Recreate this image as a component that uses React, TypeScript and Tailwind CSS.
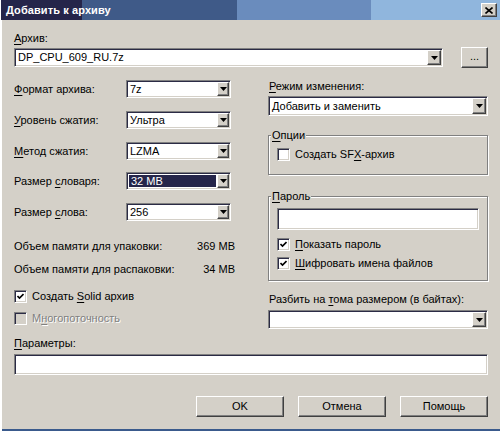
import React from 'react';

const sunken =
  'border border-t-[#808080] border-l-[#808080] border-b-white border-r-white shadow-[inset_1px_1px_0_#2b2b45,inset_-1px_-1px_0_#d4d0c8] p-px bg-white';
const raised =
  'border border-t-white border-l-white border-b-[#404040] border-r-[#404040] shadow-[inset_-1px_-1px_0_#808080] bg-[#d4d0c8]';

function U({ children }: { children: React.ReactNode }) {
  return <span className="underline underline-offset-[2px] decoration-1">{children}</span>;
}

function Arrow() {
  return (
    <svg width="7" height="4" viewBox="0 0 7 4">
      <polygon points="0,0 7,0 3.5,4" fill="#000" />
    </svg>
  );
}

function Combo({
  value = '',
  className = '',
  btn = 'w-[14px]',
  selected = false,
}: {
  value?: string;
  className?: string;
  btn?: string;
  selected?: boolean;
}) {
  return (
    <div className={`flex ${sunken} ${className}`}>
      <div
        className={`flex-1 min-w-0 flex items-center pl-[2px] ${selected ? 'bg-[#25254a] text-white m-px' : ''}`}
      >
        {value}
      </div>
      <div className={`${raised} ${btn} flex items-center justify-center`}>
        <Arrow />
      </div>
    </div>
  );
}

function Check({
  checked = false,
  disabled = false,
  children,
}: {
  checked?: boolean;
  disabled?: boolean;
  children: React.ReactNode;
}) {
  return (
    <div className="flex items-center h-[13px]">
      <div
        className={`w-[13px] h-[13px] shrink-0 border border-t-[#808080] border-l-[#808080] border-b-white border-r-white shadow-[inset_1px_1px_0_#2b2b45,inset_-1px_-1px_0_#d4d0c8] flex items-center justify-center ${
          disabled ? 'bg-[#d4d0c8]' : 'bg-white'
        }`}
      >
        {checked && (
          <svg width="7" height="7" viewBox="0 0 7 7">
            <polyline points="0.5,3 2.5,5 6.5,1" fill="none" stroke="#000" strokeWidth="1.6" />
          </svg>
        )}
      </div>
      <span
        className={`ml-[5px] whitespace-nowrap ${disabled ? 'text-[#808080] [text-shadow:1px_1px_0_#fff]' : ''}`}
      >
        {children}
      </span>
    </div>
  );
}

function Group({
  title,
  className = '',
  children,
}: {
  title: React.ReactNode;
  className?: string;
  children: React.ReactNode;
}) {
  return (
    <div
      className={`relative border border-[#808080] shadow-[1px_1px_0_#fff,inset_1px_1px_0_#fff] ${className}`}
    >
      <span className="absolute -top-[7px] left-[2px] px-px bg-[#d4d0c8] leading-[13px]">{title}</span>
      {children}
    </div>
  );
}

function Button({ children, className = '' }: { children: React.ReactNode; className?: string }) {
  return (
    <div className={`${raised} flex items-center justify-center ${className}`}>{children}</div>
  );
}

function Row({ label, children, className = '' }: { label: React.ReactNode; children: React.ReactNode; className?: string }) {
  return (
    <div className={`flex items-center ${className}`}>
      <span className="flex-1 whitespace-nowrap">{label}</span>
      {children}
    </div>
  );
}

export default function App() {
  return (
    <div className="w-[500px] h-[431px] overflow-hidden bg-[#d4d0c8] text-black text-[11px] leading-[13px] font-['Liberation_Sans',Arial,sans-serif] shadow-[inset_2px_0_0_#fff,inset_0_-2px_0_#3a5a8c]">
      {/* title bar */}
      <div className="h-[20px] ml-px flex items-center justify-between pl-[5px] pr-[3px] bg-[linear-gradient(to_right,#25254a_0_81px,#3f5a88_81px_236px,#6a8cbd_236px_370px,#90b6dd_370px)]">
        <span className="text-white font-bold text-[11px] tracking-[0.1px]">Добавить к архиву</span>
        <div className={`${raised} w-[16px] h-[14px] flex items-center justify-center`}>
          <svg width="8" height="7" viewBox="0 0 8 7">
            <path d="M0.5 0.5 L7.5 6.5 M7.5 0.5 L0.5 6.5" stroke="#000" strokeWidth="1.6" />
          </svg>
        </div>
      </div>

      <div className="pl-[14px] pr-[12px] pt-[12px]">
        <div>
          <U>А</U>рхив:
        </div>
        <div className="mt-[2px] flex items-center">
          <Combo value="DP_CPU_609_RU.7z" className="w-[429px] h-[19px]" />
          <Button className="ml-auto w-[27px] h-[21px] pb-[3px]">...</Button>
        </div>

        <div className="grid grid-cols-[221px_220px] gap-x-[33px]">
          {/* left column */}
          <div className="flex flex-col">
            <Row label={<><U>Ф</U>ормат архива:</>} className="mt-[12px]">
              <Combo value="7z" className="w-[105px] h-[18px] mr-[4px]" btn="w-[12px]" />
            </Row>
            <Row label={<><U>У</U>ровень сжатия:</>} className="mt-[13px]">
              <Combo value="Ультра" className="w-[105px] h-[18px] mr-[4px]" btn="w-[12px]" />
            </Row>
            <Row label={<><U>М</U>етод сжатия:</>} className="mt-[13px]">
              <Combo value="LZMA" className="w-[105px] h-[18px] mr-[4px]" btn="w-[12px]" />
            </Row>
            <Row label={<>Размер <U>с</U>ловаря:</>} className="mt-[12px]">
              <Combo value="32 MB" selected className="w-[105px] h-[18px] mr-[4px]" btn="w-[12px]" />
            </Row>
            <Row label={<>Размер <U>с</U>лова:</>} className="mt-[13px]">
              <Combo value="256" className="w-[105px] h-[18px] mr-[4px]" btn="w-[12px]" />
            </Row>
            <div className="mt-[19px] flex justify-between">
              <span>Объем памяти для упаковки:</span>
              <span>369 MB</span>
            </div>
            <div className="mt-[10px] flex justify-between">
              <span>Объем памяти для распаковки:</span>
              <span>34 MB</span>
            </div>
            <div className="mt-[14px]">
              <Check checked>
                Создать <U>S</U>olid архив
              </Check>
            </div>
            <div className="mt-[9px]">
              <Check disabled>
                М<U>н</U>огопоточность
              </Check>
            </div>
          </div>

          {/* right column */}
          <div className="flex flex-col">
            <div className="mt-[12px] pl-px">
              <U>Р</U>ежим изменения:
            </div>
            <Combo value="Добавить и заменить" className="mt-[3px] h-[20px]" />

            <Group title={<><U>О</U>пции</>} className="mt-[19px] h-[40px] pt-[12px] pl-[8px]">
              <Check>
                Создать SF<U>X</U>-архив
              </Check>
            </Group>

            <Group title={<><U>П</U>ароль</>} className="mt-[21px] pt-[11px] pl-[8px] pb-[10px]">
              <div className={`${sunken} w-[202px] h-[22px]`} />
              <div className="mt-[8px]">
                <Check checked>
                  <U>П</U>оказать пароль
                </Check>
              </div>
              <div className="mt-[6px]">
                <Check checked>
                  <U>Ш</U>ифровать имена файлов
                </Check>
              </div>
            </Group>

            <div className="mt-[12px] pl-px">
              Разбить на <U>т</U>ома размером (в байтах):
            </div>
            <Combo className="mt-[4px] h-[19px]" />
          </div>
        </div>

        <div className="mt-[8px]">
          <U>П</U>араметры:
        </div>
        <div className={`${sunken} mt-[4px] h-[21px]`} />

        <div className="mt-[21px] flex justify-end gap-[14px]">
          <Button className="w-[88px] h-[21px]">OK</Button>
          <Button className="w-[88px] h-[21px]">Отмена</Button>
          <Button className="w-[88px] h-[21px]">Помощь</Button>
        </div>
      </div>
    </div>
  );
}
